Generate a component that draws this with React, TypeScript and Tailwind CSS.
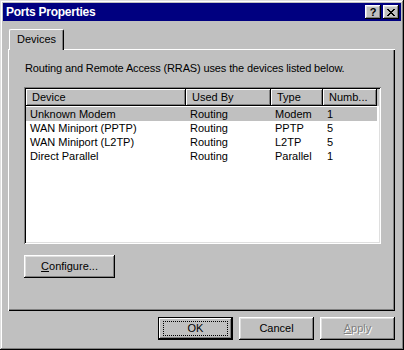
import React from "react";

// Win95-style bevels
const raised =
  "shadow-[inset_-1px_-1px_0_#000,inset_1px_1px_0_#fff,inset_-2px_-2px_0_#808080,inset_2px_2px_0_#dfdfdf]";
const sunken =
  "shadow-[inset_1px_1px_0_#808080,inset_-1px_-1px_0_#fff,inset_2px_2px_0_#000,inset_-2px_-2px_0_#dfdfdf]";

const columns = [
  { label: "Device", width: "w-[160px]" },
  { label: "Used By", width: "w-[85px]" },
  { label: "Type", width: "w-[52px]" },
  { label: "Numb...", width: "w-[54px]" },
];

const rows = [
  ["Unknown Modem", "Routing", "Modem", "1"],
  ["WAN Miniport (PPTP)", "Routing", "PPTP", "5"],
  ["WAN Miniport (L2TP)", "Routing", "L2TP", "5"],
  ["Direct Parallel", "Routing", "Parallel", "1"],
];

const TitleButton = ({ children }: { children: React.ReactNode }) => (
  <div
    className={`w-[16px] h-[14px] bg-[#c0c0c0] flex items-center justify-center ${raised}`}
  >
    {children}
  </div>
);

const PushButton = ({
  children,
  isDefault = false,
}: {
  children: React.ReactNode;
  isDefault?: boolean;
}) => {
  if (isDefault) {
    return (
      <div className="w-[75px] h-[23px] border border-black">
        <div className="w-full h-full flex items-center justify-center shadow-[inset_-1px_-1px_0_#000,inset_1px_1px_0_#fff,inset_-2px_-2px_0_#808080]">
          <div className="w-[65px] h-[15px] border border-dotted border-black flex items-center justify-center leading-none">
            {children}
          </div>
        </div>
      </div>
    );
  }
  return (
    <div
      className={`w-[75px] h-[23px] flex items-center justify-center ${raised}`}
    >
      {children}
    </div>
  );
};

export default function App() {
  return (
    <div
      className={`w-[404px] h-[350px] bg-[#c0c0c0] p-[3px] flex flex-col font-['Liberation_Sans',Arial,sans-serif] text-[11px] text-black shadow-[inset_-1px_-1px_0_#000,inset_1px_1px_0_#dfdfdf,inset_-2px_-2px_0_#808080,inset_2px_2px_0_#fff]`}
    >
      {/* Title bar */}
      <div className="h-[18px] bg-[#000080] flex items-center justify-between pl-[3px] pr-[2px]">
        <span className="text-white font-bold text-[12px] tracking-[-0.25px] leading-none">
          Ports Properties
        </span>
        <div className="flex gap-[2px]">
          <TitleButton>
            <span className="font-bold text-[11px] leading-none mt-[1px]">?</span>
          </TitleButton>
          <TitleButton>
            <svg width="8" height="7" viewBox="0 0 8 7" shapeRendering="crispEdges">
              <path
                d="M0 0h2v1h-2zM6 0h2v1h-2zM1 1h2v1h-2zM5 1h2v1h-2zM2 2h4v1h-4zM3 3h2v1h-2zM2 4h4v1h-4zM1 5h2v1h-2zM5 5h2v1h-2zM0 6h2v1h-2zM6 6h2v1h-2z"
                fill="#000"
              />
            </svg>
          </TitleButton>
        </div>
      </div>

      {/* Body */}
      <div className="flex-1 flex flex-col pt-[8px] pl-[5px] pr-[6px]">
        {/* Tab strip */}
        <div className="h-[20px] flex items-end">
          <div className="relative z-10 ml-[1px] w-[55px] h-[21px] -mb-[1px] bg-[#c0c0c0] border-l border-t border-r border-l-white border-t-white border-r-black rounded-tl-[2px] rounded-tr-[2px] shadow-[inset_-1px_0_0_#808080] flex items-center pl-[7px] pb-[2px]">
            Devices
          </div>
        </div>

        {/* Tab panel */}
        <div className="h-[262px] flex flex-col pl-[16px] pt-[13px] shadow-[inset_1px_1px_0_#fff,inset_-1px_-1px_0_#000,inset_-2px_-2px_0_#808080]">
          <p className="leading-[13px] pl-[1px] tracking-[-0.13px]">
            Routing and Remote Access (RRAS) uses the devices listed below.
          </p>

          {/* List view */}
          <div className={`mt-[12px] w-[357px] h-[157px] bg-white p-[2px] ${sunken}`}>
            <div className="flex h-[17px] bg-[#c0c0c0]">
              {columns.map((c) => (
                <div
                  key={c.label}
                  className={`${c.width} h-full flex items-center pl-[6px] shadow-[inset_-1px_-1px_0_#000,inset_1px_1px_0_#fff,inset_-2px_-2px_0_#808080]`}
                >
                  {c.label}
                </div>
              ))}
            </div>
            <div className="pt-[1px]">
              {rows.map((r, i) => (
                <div
                  key={r[0]}
                  className={`flex h-[14px] w-[351px] items-center ${i === 0 ? "bg-[#c0c0c0]" : ""}`}
                >
                  {r.map((cell, j) => (
                    <div
                      key={j}
                      className={`${columns[j].width} pl-[4px] leading-[14px] whitespace-nowrap`}
                    >
                      {cell}
                    </div>
                  ))}
                </div>
              ))}
            </div>
          </div>

          <div className="mt-[11px]">
            <div
              className={`w-[91px] h-[23px] flex items-center justify-center ${raised}`}
            >
              <span>
                <span className="underline">C</span>onfigure...
              </span>
            </div>
          </div>
        </div>

        {/* Dialog buttons */}
        <div className="mt-[6px] flex justify-end gap-[6px]">
          <PushButton isDefault>OK</PushButton>
          <PushButton>Cancel</PushButton>
          <PushButton>
            <span className="text-[#808080] [text-shadow:1px_1px_0_#fff]">
              <span className="underline">A</span>pply
            </span>
          </PushButton>
        </div>
      </div>
    </div>
  );
}
